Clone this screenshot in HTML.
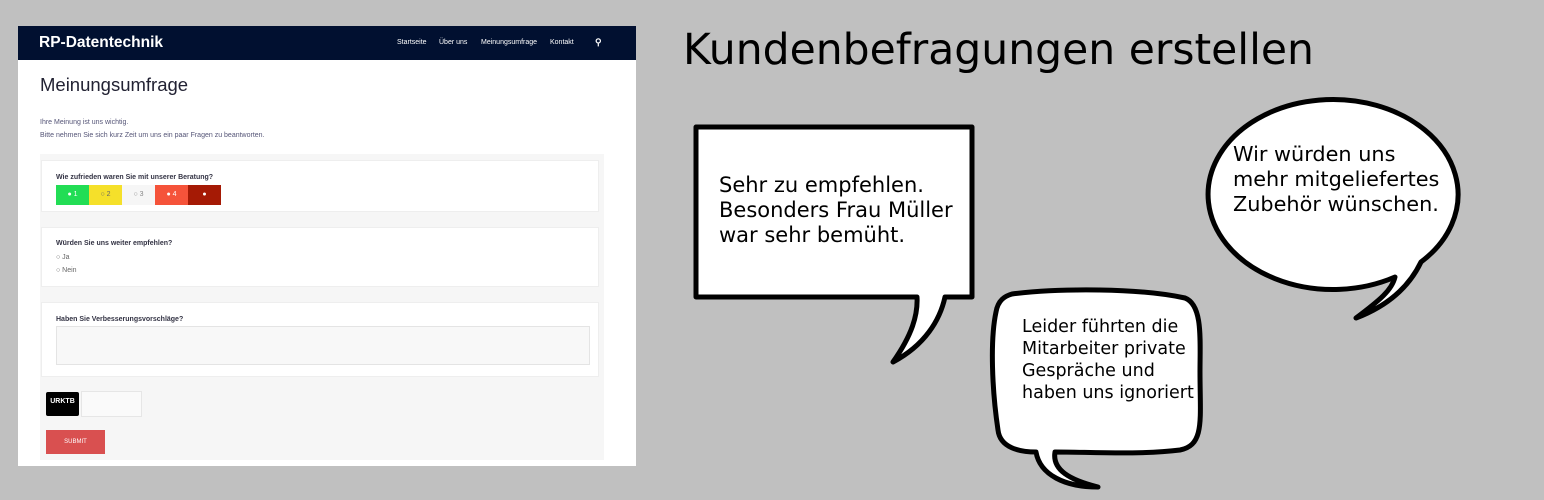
<!DOCTYPE html>
<html><head><meta charset="utf-8"><style>
body{margin:0;width:1544px;height:500px;background:#c0c0c0;position:relative;overflow:hidden;font-family:"Liberation Sans",sans-serif}
.shot{position:absolute;left:18px;top:26px;width:618px;height:440px;background:#fff}
.nav{height:34px;background:#011030;position:relative}
.logo{position:absolute;left:21px;top:8px;color:#fff;font-weight:bold;font-size:15.5px}
.menu{position:absolute;top:13px;color:#fff;font-size:7px}
.a{position:absolute}
.card{position:absolute;left:23px;width:556px;background:#fff;border:1px solid #eee}
.q{font-size:7px;font-weight:bold;color:#334}
.t{font-size:7px;color:#666}
.dj{font-family:"DejaVu Sans",sans-serif;color:#000;position:absolute}
</style></head><body>
<div class="shot">
 <div class="nav"><div class="logo">RP-Datentechnik</div>
 <span class="menu" style="left:379px">Startseite</span><span class="menu" style="left:421px">Über uns</span><span class="menu" style="left:463px">Meinungsumfrage</span><span class="menu" style="left:532px">Kontakt</span><span class="menu" style="left:577px;font-weight:bold;font-size:9px;top:11px">⚲</span></div>
 <div class="a" style="left:22px;top:48px;font-size:18.5px;color:#223">Meinungsumfrage</div>
 <div class="a t" style="left:22px;top:93px;color:#557">Ihre Meinung ist uns wichtig.</div>
 <div class="a t" style="left:22px;top:106px;color:#557">Bitte nehmen Sie sich kurz Zeit um uns ein paar Fragen zu beantworten.</div>
 <div class="a" style="left:22px;top:128px;width:564px;height:306px;background:#f6f6f6"></div>
 <div class="card" style="top:134px;height:50px"><div class="a q" style="left:14px;top:13px">Wie zufrieden waren Sie mit unserer Beratung?</div>
  <div class="a" style="left:14px;top:24px;height:20px;width:165px;display:flex;font-size:7px;line-height:20px">
   <div style="width:33px;background:#22dd55;text-align:center;color:#fff">● 1</div><div style="width:33px;background:#f5e02a;text-align:center;color:#666">○ 2</div><div style="width:33px;background:#f6f6f6;text-align:center;color:#888">○ 3</div><div style="width:33px;background:#f5533a;text-align:center;color:#fff">● 4</div><div style="width:33px;background:#a51a05;text-align:center;color:#fff">●</div></div></div>
 <div class="card" style="top:201px;height:58px"><div class="a q" style="left:14px;top:12px">Würden Sie uns weiter empfehlen?</div>
  <div class="a t" style="left:14px;top:26px">○ Ja</div><div class="a t" style="left:14px;top:39px">○ Nein</div></div>
 <div class="card" style="top:276px;height:73px"><div class="a q" style="left:14px;top:13px">Haben Sie Verbesserungsvorschläge?</div>
  <div class="a" style="left:14px;top:23px;width:532px;height:37px;background:#f8f8f8;border:1px solid #e4e4e4"></div></div>
 <div class="a" style="left:28px;top:366px;width:33px;height:24px;background:#000;color:#fff;font-size:7px;font-weight:bold;line-height:20px;text-align:center;border-radius:2px">URKTB</div>
 <div class="a" style="left:63px;top:365px;width:59px;height:24px;background:#fafafa;border:1px solid #e6e6e6"></div>
 <div class="a" style="left:28px;top:404px;width:59px;height:24px;background:#d95050;color:#fff;font-size:6px;line-height:24px;text-align:center">SUBMIT</div>
</div>
<div class="dj" style="left:683px;top:26px;font-size:42.5px">Kundenbefragungen erstellen</div>
<svg class="a" style="left:0;top:0" width="1544" height="500">
 <g fill="#fff" stroke="#000" stroke-width="5" stroke-linejoin="round">
  <path d="M696,127 H972 V297 H945 C940,320 925,345 893,362 C912,335 918,315 917,297 H696 Z"/>
  <path d="M1395,277 A125,95 0 1 1 1421,262 C1410,285 1390,305 1356,318 C1380,300 1392,290 1395,277 Z"/>
  <path d="M1012,294 C1060,288 1140,288 1185,298 C1203,305 1200,340 1200,372 C1200,420 1205,445 1180,450 C1140,455 1090,452 1055,452 C1052,470 1070,480 1098,487 C1065,487 1040,475 1036,452 C1020,452 1000,448 998,430 C992,390 990,340 996,312 C998,300 1005,296 1012,294 Z"/>
 </g>
</svg>
<div class="dj" style="left:719px;top:173px;font-size:21px;line-height:25px">Sehr zu empfehlen.<br>Besonders Frau Müller<br>war sehr bemüht.</div>
<div class="dj" style="left:1233px;top:142px;font-size:20.8px;line-height:25px">Wir würden uns<br>mehr mitgeliefertes<br>Zubehör wünschen.</div>
<div class="dj" style="left:1022px;top:316px;font-size:17.5px;line-height:22px">Leider führten die<br>Mitarbeiter private<br>Gespräche und<br>haben uns ignoriert</div>
</body></html>
